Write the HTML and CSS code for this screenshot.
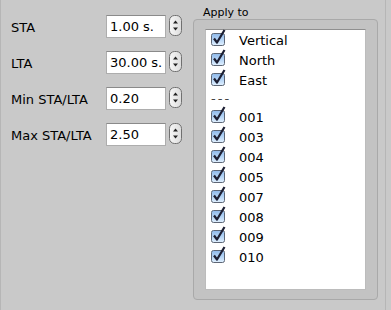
FILE: index.html
```html
<!DOCTYPE html>
<html lang="en">
<head>
<meta charset="UTF-8">
<title>STA/LTA</title>
<link rel="stylesheet" href="styles.css">
</head>
<body>
<svg class="defs" width="0" height="0">
  <defs>
    <linearGradient id="stepGrad" x1="0" y1="0" x2="1" y2="0">
      <stop offset="0" stop-color="#f7f7f7"/>
      <stop offset="1" stop-color="#dcdcdc"/>
    </linearGradient>
    <linearGradient id="boxGrad" x1="0" y1="0" x2="0" y2="1">
      <stop offset="0" stop-color="#8fb9ea"/>
      <stop offset="0.5" stop-color="#b3d3f5"/>
      <stop offset="1" stop-color="#e2f1ff"/>
    </linearGradient>
    <symbol id="check" viewBox="0 0 15 17">
      <rect x="0.5" y="4.5" width="13" height="12" rx="2" fill="url(#boxGrad)" stroke="#5d6675"/>
      <path d="M3 9.5 L6 13.5 L13.5 1" fill="none" stroke="#1d1f33" stroke-width="2.2" stroke-linejoin="round"/>
    </symbol>
    <symbol id="step" viewBox="0 0 13 21">
      <rect x="0.5" y="0.5" width="12" height="20" rx="5" fill="url(#stepGrad)" stroke="#707070"/>
      <path d="M4 8.5 L6.5 5.5 L9 8.5 Z" fill="#222"/>
      <path d="M4 12.5 L6.5 15.5 L9 12.5 Z" fill="#222"/>
    </symbol>
  </defs>
</svg>

<div class="window">
  <div class="params">
    <div class="param">
      <label for="sta">STA</label>
      <input class="field" type="text" id="sta" value="1.00 s.">
      <svg class="stepper" width="13" height="21"><use href="#step"/></svg>
    </div>
    <div class="param">
      <label for="lta">LTA</label>
      <input class="field" type="text" id="lta" value="30.00 s.">
      <svg class="stepper" width="13" height="21"><use href="#step"/></svg>
    </div>
    <div class="param">
      <label for="minratio">Min STA/LTA</label>
      <input class="field" type="text" id="minratio" value="0.20">
      <svg class="stepper" width="13" height="21"><use href="#step"/></svg>
    </div>
    <div class="param">
      <label for="maxratio">Max STA/LTA</label>
      <input class="field" type="text" id="maxratio" value="2.50">
      <svg class="stepper" width="13" height="21"><use href="#step"/></svg>
    </div>
  </div>

  <div class="apply">
    <div class="apply-title">Apply to</div>
    <div class="group-box">
      <div class="list">
        <div class="row"><svg class="cb" width="15" height="17"><use href="#check"/></svg>Vertical</div>
        <div class="row"><svg class="cb" width="15" height="17"><use href="#check"/></svg>North</div>
        <div class="row"><svg class="cb" width="15" height="17"><use href="#check"/></svg>East</div>
        <div class="sep">---</div>
        <div class="row"><svg class="cb" width="15" height="17"><use href="#check"/></svg>001</div>
        <div class="row"><svg class="cb" width="15" height="17"><use href="#check"/></svg>003</div>
        <div class="row"><svg class="cb" width="15" height="17"><use href="#check"/></svg>004</div>
        <div class="row"><svg class="cb" width="15" height="17"><use href="#check"/></svg>005</div>
        <div class="row"><svg class="cb" width="15" height="17"><use href="#check"/></svg>007</div>
        <div class="row"><svg class="cb" width="15" height="17"><use href="#check"/></svg>008</div>
        <div class="row"><svg class="cb" width="15" height="17"><use href="#check"/></svg>009</div>
        <div class="row"><svg class="cb" width="15" height="17"><use href="#check"/></svg>010</div>
      </div>
    </div>
  </div>
</div>
</body>
</html>
```

FILE: styles.css
```css
body, html {
  margin: 0;
  height: 100%;
  background: #c9c9c9;
  font-family: "DejaVu Sans", sans-serif;
  font-size: 13px;
  color: #000;
}

.defs {
  position: absolute;
}

.window {
  display: flex;
  width: 386px;
  height: 310px;
  box-sizing: border-box;
  border-left: 1px solid #b6b6b6;
  border-right: 1px solid #b6b6b6;
}

.params {
  display: flex;
  flex-direction: column;
  gap: 13px;
  padding: 15px 0 0 10px;
}

.param {
  display: flex;
  align-items: flex-start;
  height: 23px;
}

.param label {
  width: 95px;
  line-height: 23px;
  padding-top: 1px;
}

.field {
  width: 60px;
  height: 23px;
  margin: 0;
  padding: 0 0 0 3px;
  box-sizing: border-box;
  border: 1px solid #adadad;
  border-top-color: #8a8a8a;
  border-radius: 0;
  background: #fff;
  font: inherit;
  color: #000;
  line-height: 21px;
  outline: none;
}

.stepper {
  margin-left: 3px;
}

.apply {
  margin-left: 11px;
}

.apply-title {
  font-size: 11px;
  line-height: 13px;
  margin-top: 6px;
  padding-left: 10px;
}

.group-box {
  width: 185px;
  height: 281px;
  box-sizing: border-box;
  padding: 9px 11px;
  background: #c3c3c3;
  border: 1px solid #a9a9a9;
  border-radius: 4px;
}

.list {
  height: 100%;
  box-sizing: border-box;
  padding-left: 5px;
  background: #fff;
  border: 1px solid #bcbcbc;
  border-top-color: #8f8f8f;
}

.row {
  display: flex;
  align-items: center;
  height: 20px;
}

.cb {
  align-self: flex-start;
  margin-top: -1px;
  margin-right: 13px;
}

.sep {
  height: 17px;
  line-height: 17px;
  color: #444;
  letter-spacing: 2px;
}
```
